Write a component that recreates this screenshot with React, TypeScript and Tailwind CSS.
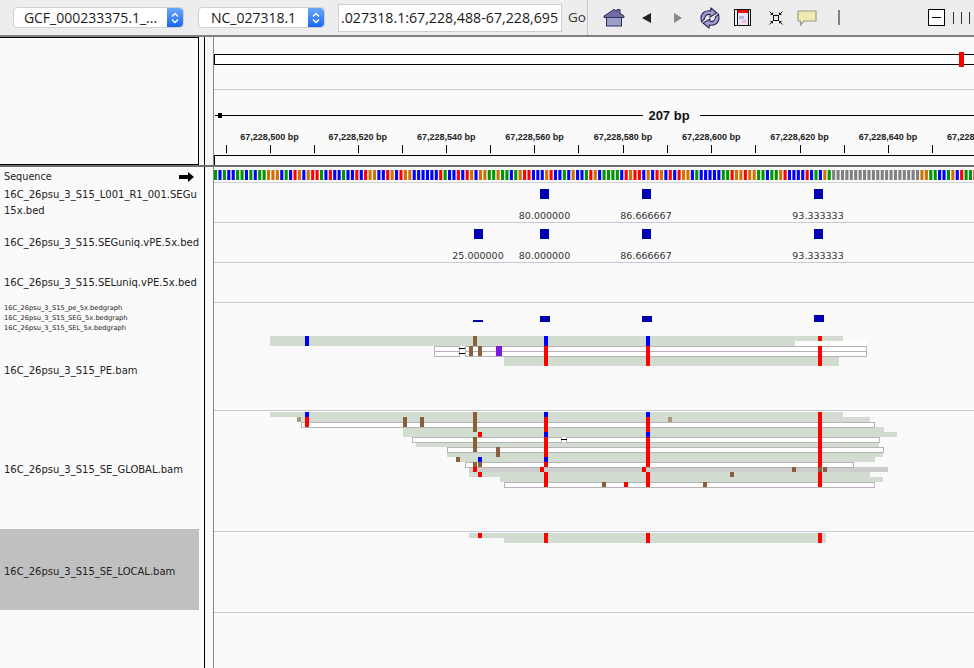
import React from "react";

type Box = [number, number, number, number, string];

const GREEN = "#d2dcd1";
const BROWN = "#8b5e3c";
const RED = "#ff0000";
const BLUE = "#0000ff";
const TAN = "#a8997f";
const WHITE = "#ffffff";
const EDGE = "#b4b4b4";

const SEQ =
  "ACACCAACACAAGGGCACTGCGTTACTCCACCTCTGGCCTGCTGGCCCCCCTACCTCTGCGGAAGAACAGTTCCCGTCCACGCCAT" +
  "GCAAAACTGTTCGCTGCTCTGGCACCCCCAATGGTGGAACAAGTCCCCTCACGA" +
  "NNNNNNNNNNNNNNNNNNNN" +
  "GGAACCAGCTAATG";

const BASE_COLORS: Record<string, string> = {
  A: "#009600",
  C: "#0000ff",
  G: "#d17105",
  T: "#ff0000",
  N: "#808080",
};

const RULER = ["500", "520", "540", "560", "580", "600", "620", "640", "660"];
const TICKS = [225.5, 269.5, 313.5, 357.5, 401.5, 446, 490, 534, 578, 623, 667, 711, 755, 800, 844, 888, 932];

// all coordinates below are page coordinates [x1, y1, x2, y2, colour]
const PE_FILL: Box[] = [
  [270, 336, 843, 341, GREEN],
  [270, 341, 795, 346, GREEN],
  [795, 341, 867, 346, WHITE],
  [504, 356, 839, 366, GREEN],
];
const PE_OUTLINE: [number, number, number, number][] = [
  [434, 346, 460, 351],
  [434, 351, 460, 356],
  [465, 346, 867, 351],
  [465, 351, 867, 356],
];
const PE_MARKS: Box[] = [
  [305, 336, 309, 346, BLUE],
  [473, 336, 477, 346, BROWN],
  [469, 346, 473, 356, BROWN],
  [478, 346, 482, 356, BROWN],
  [496, 346, 502, 356, "#7a1adf"],
  [544, 336, 548, 346, BLUE],
  [544, 346, 548, 366, RED],
  [646, 336, 650, 346, BLUE],
  [646, 346, 650, 366, RED],
  [818, 336, 822, 341, RED],
  [818, 346, 822, 366, RED],
  [459, 348, 465, 349, "#000000"],
  [459, 353, 465, 354, "#000000"],
];

const GLOBAL_FILL: Box[] = [
  [270, 412, 843, 417, GREEN],
  [301, 417, 870, 422, GREEN],
  [403, 427, 884, 432, GREEN],
  [403, 432, 897, 437, GREEN],
  [416, 442, 879, 447, GREEN],
  [447, 452, 883, 457, GREEN],
  [460, 457, 875, 462, GREEN],
  [469, 467, 888, 472, "#cdcdcd"],
  [469, 472, 870, 477, GREEN],
  [500, 477, 883, 482, GREEN],
];
const GLOBAL_OUTLINE: [number, number, number, number][] = [
  [301, 422, 875, 427],
  [412, 437, 562, 442],
  [566, 437, 880, 442],
  [447, 447, 884, 452],
  [465, 462, 854, 467],
  [504, 482, 875, 487],
];
const GLOBAL_MARKS: Box[] = [
  [297, 417, 301, 422, TAN],
  [305, 412, 309, 417, BLUE],
  [305, 417, 309, 427, RED],
  [403, 417, 407, 427, BROWN],
  [420, 417, 424, 427, BROWN],
  [473, 412, 477, 432, BROWN],
  [473, 437, 477, 452, BROWN],
  [473, 462, 477, 467, BROWN],
  [473, 467, 477, 472, RED],
  [478, 432, 482, 437, RED],
  [478, 457, 482, 462, BLUE],
  [478, 462, 482, 467, BROWN],
  [478, 472, 482, 477, RED],
  [456, 457, 460, 462, BROWN],
  [496, 447, 500, 457, BROWN],
  [544, 412, 548, 417, BLUE],
  [544, 417, 548, 432, RED],
  [544, 432, 548, 437, BLUE],
  [544, 437, 548, 457, RED],
  [544, 457, 548, 462, BLUE],
  [544, 462, 548, 467, RED],
  [540, 467, 544, 472, RED],
  [544, 472, 548, 487, RED],
  [646, 412, 650, 417, BLUE],
  [646, 417, 650, 432, RED],
  [646, 432, 650, 437, BLUE],
  [646, 437, 650, 467, RED],
  [642, 467, 646, 472, RED],
  [646, 472, 650, 487, RED],
  [818, 412, 822, 467, RED],
  [818, 467, 822, 472, BROWN],
  [818, 472, 822, 487, RED],
  [668, 417, 672, 422, TAN],
  [792, 467, 796, 472, BROWN],
  [823, 467, 827, 472, BROWN],
  [730, 472, 734, 477, BROWN],
  [602, 482, 606, 487, BROWN],
  [624, 482, 628, 487, RED],
  [703, 482, 707, 487, BROWN],
  [561, 439, 567, 440, "#000000"],
];

const LOCAL_FILL: Box[] = [
  [469, 533, 504, 538, GREEN],
  [504, 533, 826, 543, GREEN],
  [478, 533, 482, 538, RED],
  [544, 533, 548, 543, RED],
  [646, 533, 650, 543, RED],
  [818, 533, 822, 543, RED],
];

const Rects = ({ items }: { items: Box[] }) => (
  <>
    {items.map(([x1, y1, x2, y2, c], i) => (
      <rect key={i} x={x1} y={y1} width={x2 - x1} height={y2 - y1} fill={c} />
    ))}
  </>
);

const Outlines = ({ items }: { items: [number, number, number, number][] }) => (
  <>
    {items.map(([x1, y1, x2, y2], i) => (
      <rect key={i} x={x1 + 0.5} y={y1 + 0.5} width={x2 - x1 - 1} height={y2 - y1} fill="#fff" stroke={EDGE} />
    ))}
  </>
);

// one data track, drawn in page coordinates so the numbers read like the picture
const Track = ({ top, bottom, children, line = true }: { top: number; bottom: number; children?: React.ReactNode; line?: boolean }) => (
  <div className={line ? "border-b border-[#c9c9d6] box-border" : ""} style={{ height: bottom - top }}>
    <svg
      className="block w-full"
      height={bottom - top - (line ? 1 : 0)}
      viewBox={`214 ${top} 760 ${bottom - top - (line ? 1 : 0)}`}
      shapeRendering="crispEdges"
    >
      {children}
    </svg>
  </div>
);

const Value = ({ x, y, children }: { x: number; y: number; children: string }) => (
  <text x={x} y={y} textAnchor="middle" fontSize="9.5" fill="#333" fontFamily="'DejaVu Sans', sans-serif" shapeRendering="auto">
    {children}
  </text>
);

const Chevrons = () => (
  <svg width="10" height="14" viewBox="0 0 10 14" fill="none" stroke="#fff" strokeWidth="1.4">
    <path d="M2 5.5 5 2.5 8 5.5" />
    <path d="M2 8.5 5 11.5 8 8.5" />
  </svg>
);

const Picker = ({ label, className }: { label: string; className: string }) => (
  <div className={`flex h-[21px] items-stretch rounded-[4px] border border-[#d0d0d0] bg-white ${className}`}>
    <span className="flex-1 text-center text-[14px] leading-[19px] text-[#1a1a1a] whitespace-nowrap overflow-hidden">{label}</span>
    <span className="flex w-[16px] items-center justify-center rounded-r-[4px] bg-gradient-to-b from-[#6aa6fb] to-[#1566f0]">
      <Chevrons />
    </span>
  </div>
);

const HomeIcon = () => (
  <svg width="22" height="19" viewBox="0 0 22 19">
    <path d="M1 8 11 1.5 14 3.2V1.5H17V5.2L21 8V9.5H1Z" fill="#6d6da3" stroke="#2f2f5e" strokeWidth="1" />
    <rect x="3.5" y="9.5" width="15" height="8.5" fill="#9d9dc9" stroke="#2f2f5e" />
  </svg>
);

const RefreshIcon = () => (
  <svg width="22" height="22" viewBox="0 0 22 22">
    <path d="M2 11C2 6 6.5 3 11.5 4L12 1 18 6 11 10V7.5C8 7 6 8.5 5.5 12L2.5 15C2.2 13.5 2 12.5 2 11Z" fill="#9d9dd0" stroke="#2b2b55" strokeWidth="1.1" />
    <path d="M20 11C20 16 15.5 19 10.5 18L10 21 4 16 11 12V14.5C14 15 16 13.5 16.5 10L19.5 7C19.8 8.5 20 9.5 20 11Z" fill="#9d9dd0" stroke="#2b2b55" strokeWidth="1.1" />
  </svg>
);

const RegionIcon = () => (
  <svg width="17" height="17" viewBox="0 0 17 17" shapeRendering="crispEdges">
    <rect x="0.5" y="0.5" width="16" height="16" fill="#f4f4fb" stroke="#111" />
    <rect x="3" y="1" width="11" height="3" fill="#f01010" />
    <rect x="3" y="4" width="11" height="12" fill="#e6e6f7" />
    <rect x="5" y="7" width="5" height="3" fill="#b9b9e6" />
    <rect x="8" y="11" width="4" height="3" fill="#eebcc4" />
    <path d="M3 1V16M14 1V16" stroke="#111" />
  </svg>
);

const CenterIcon = () => (
  <svg width="14" height="14" viewBox="0 0 14 14" fill="none" stroke="#111" strokeWidth="1">
    <rect x="4.5" y="4.5" width="5" height="5" />
    <path d="M0.5 0.5 3.5 3.5M13.5 0.5 10.5 3.5M0.5 13.5 3.5 10.5M13.5 13.5 10.5 10.5" />
    <path d="M3.5 1.5V3.5H1.5M10.5 1.5V3.5H12.5M3.5 12.5V10.5H1.5M10.5 12.5V10.5H12.5" />
  </svg>
);

const CommentIcon = () => (
  <svg width="20" height="16" viewBox="0 0 20 16">
    <path d="M1 1H19V11H7L3.5 15V11H1Z" fill="#eeeab0" stroke="#9a9a90" strokeWidth="1.2" />
  </svg>
);

const App = () => {
  return (
    <div className="flex h-screen w-full flex-col overflow-hidden bg-[#fafafa] font-['DejaVu_Sans',sans-serif] text-[#222]">
      {/* toolbar */}
      <div className="flex h-[35px] shrink-0 items-center bg-[#ededed] font-['Open_Sans',sans-serif]">
        <Picker label="GCF_000233375.1_..." className="ml-[13px] w-[171px]" />
        <Picker label="NC_027318.1" className="ml-[14px] w-[127px]" />
        <div className="ml-[13px] h-[28px] w-[224px] overflow-hidden border border-[#cfcfcf] bg-white pl-[2px] text-[14.2px] leading-[26px] text-[#1a1a1a] whitespace-nowrap">
          .027318.1:67,228,488-67,228,695
        </div>
        <span className="ml-[6px] text-[13.5px] text-[#333]">Go</span>
        <div className="ml-[1px] h-full w-px bg-[#c8c8c8]" />
        <div className="ml-[15px] flex items-center">
          <HomeIcon />
        </div>
        <div className="ml-[17px] h-0 w-0 border-y-[5px] border-r-[9px] border-y-transparent border-r-[#222]" />
        <div className="ml-[23px] h-0 w-0 border-y-[5px] border-l-[8px] border-y-transparent border-l-[#8a8a8a]" />
        <div className="ml-[17px] flex items-center">
          <RefreshIcon />
        </div>
        <div className="ml-[13px] flex items-center">
          <RegionIcon />
        </div>
        <div className="ml-[18px] flex items-center">
          <CenterIcon />
        </div>
        <div className="ml-[14px] mt-[1px] flex items-center">
          <CommentIcon />
        </div>
        <div className="ml-[21px] h-[15px] w-[2px] bg-[#808080]" />
        <div className="ml-[88px] flex h-[17px] w-[17px] items-center justify-center border border-black bg-white">
          <div className="h-px w-[9px] bg-black" />
        </div>
        <div className="ml-[8px] h-[12px] w-px bg-[#333]" />
        <div className="ml-[7px] h-[12px] w-px bg-[#333]" />
        <div className="ml-[7px] h-[12px] w-px bg-[#333]" />
      </div>
      <div className="h-[2px] shrink-0 bg-[#7f7f7f]" />

      {/* header panel: chromosome bar and ruler */}
      <div className="flex h-[128px] shrink-0 bg-[#f7f7f7]">
        <div className="h-full w-[199px] border-y border-r border-black bg-[#fafafa]" />
        <div className="ml-[5px] h-full w-px bg-black" />
        <div className="ml-[8px] h-full w-px bg-[#888]" />
        <div className="flex-1 overflow-hidden">
          <svg className="block" width="760" height="128" viewBox="214 37 760 128">
            <g shapeRendering="crispEdges">
              <rect x="214" y="37" width="760" height="128" fill="#fafafa" />
              <rect x="214" y="54" width="762" height="10" fill="#fff" stroke="#000" />
              <rect x="959" y="52" width="5" height="15" fill="#ff0000" />
              <path d="M214 89.5H974" stroke="#c8c8d6" />
              <path d="M215 115.5H643M700 115.5H974" stroke="#000" />
              <rect x="218" y="113" width="4" height="5" fill="#000" />
              {TICKS.map((x) => (
                <path key={x} d={`M${Math.round(x) + 0.5} 145V153`} stroke="#000" />
              ))}
              <path d="M214 155.5H974M214.5 155V165" stroke="#000" />
            </g>
            <text x="669" y="120" textAnchor="middle" fontSize="13" fontWeight="700" fill="#111" fontFamily="'Liberation Sans', sans-serif">
              207 bp
            </text>
            {RULER.map((n, i) => (
              <text key={n} x={269.5 + i * 88.35} y="140" textAnchor="middle" fontSize="9" fontWeight="700" fill="#222" fontFamily="'Liberation Sans', sans-serif">
                {`67,228,${n} bp`}
              </text>
            ))}
          </svg>
        </div>
      </div>
      <div className="h-[2px] shrink-0 bg-[#6e6e6e]" />

      {/* tracks */}
      <div className="flex min-h-0 flex-1">
        <div className="flex w-[204px] shrink-0 flex-col text-[10px] text-[#222]">
          <div className="flex h-[15px] items-center justify-between pl-[4px] pr-[10px] pt-[4px]">
            <span className="translate-y-px text-[9.7px]">Sequence</span>
            <svg width="15" height="10" viewBox="0 0 15 10">
              <path d="M0 3H9V0L15 5 9 10V7H0Z" fill="#000" />
            </svg>
          </div>
          <div className="h-[40px] pl-[4px] pt-[5px] leading-[16px] whitespace-nowrap overflow-hidden">
            16C_26psu_3_S15_L001_R1_001.SEGu
            <br />
            15x.bed
          </div>
          <div className="flex h-[40px] items-center pl-[4px] whitespace-nowrap">16C_26psu_3_S15.SEGuniq.vPE.5x.bed</div>
          <div className="flex h-[40px] items-center pl-[4px] whitespace-nowrap">16C_26psu_3_S15.SELuniq.vPE.5x.bed</div>
          <div className="h-[28px] pl-[4px] pt-[1px] text-[6.7px] leading-[10px] whitespace-nowrap">
            <div>16C_26psu_3_S15_pe_5x.bedgraph</div>
            <div>16C_26psu_3_S15_SEG_5x.bedgraph</div>
            <div>16C_26psu_3_S15_SEL_5x.bedgraph</div>
          </div>
          <div className="flex h-[80px] items-center pl-[4px] whitespace-nowrap">16C_26psu_3_S15_PE.bam</div>
          <div className="flex h-[119px] items-center pl-[4px] whitespace-nowrap">16C_26psu_3_S15_SE_GLOBAL.bam</div>
          <div className="flex h-[81px] w-[199px] items-center bg-[#c0c0c0] pl-[4px] pt-[3px] whitespace-nowrap">16C_26psu_3_S15_SE_LOCAL.bam</div>
        </div>
        <div className="w-px shrink-0 bg-black" />
        <div className="ml-[8px] w-px shrink-0 bg-[#888]" />
        <div className="min-w-0 flex-1 overflow-hidden">
          <div className="h-[16px] border-b border-[#cfcfcf] box-border">
            <svg className="block" width="760" height="15" viewBox="214 167 760 15">
              {SEQ.split("").map((b, i) => (
                <rect key={i} x={214 + i * 4.415} y="170" width="3.1" height="10" fill={BASE_COLORS[b]} />
              ))}
            </svg>
          </div>
          <Track top={183} bottom={223}>
            <rect x="540" y="189" width="9" height="10" fill="#0000b0" />
            <rect x="642" y="189" width="9" height="10" fill="#0000b0" />
            <rect x="814" y="189" width="9" height="10" fill="#0000b0" />
            <Value x={544.5} y={219}>80.000000</Value>
            <Value x={646} y={219}>86.666667</Value>
            <Value x={818} y={219}>93.333333</Value>
          </Track>
          <Track top={223} bottom={263}>
            <rect x="474" y="229" width="9" height="10" fill="#0000b0" />
            <rect x="540" y="229" width="9" height="10" fill="#0000b0" />
            <rect x="642" y="229" width="9" height="10" fill="#0000b0" />
            <rect x="814" y="229" width="9" height="10" fill="#0000b0" />
            <Value x={478} y={259}>25.000000</Value>
            <Value x={544.5} y={259}>80.000000</Value>
            <Value x={646} y={259}>86.666667</Value>
            <Value x={818} y={259}>93.333333</Value>
          </Track>
          <Track top={263} bottom={303} />
          <Track top={303} bottom={330} line={false}>
            <rect x="473" y="320" width="10" height="2" fill="#0000b0" />
            <rect x="540" y="316" width="10" height="6" fill="#0000b0" />
            <rect x="642" y="316" width="10" height="6" fill="#0000b0" />
            <rect x="814" y="315" width="10" height="7" fill="#0000b0" />
          </Track>
          <Track top={330} bottom={411}>
            <Rects items={PE_FILL} />
            <Outlines items={PE_OUTLINE} />
            <Rects items={PE_MARKS} />
          </Track>
          <Track top={411} bottom={532}>
            <Rects items={GLOBAL_FILL} />
            <Outlines items={GLOBAL_OUTLINE} />
            <Rects items={GLOBAL_MARKS} />
          </Track>
          <Track top={532} bottom={613}>
            <Rects items={LOCAL_FILL} />
          </Track>
        </div>
      </div>
    </div>
  );
};

export default App;
